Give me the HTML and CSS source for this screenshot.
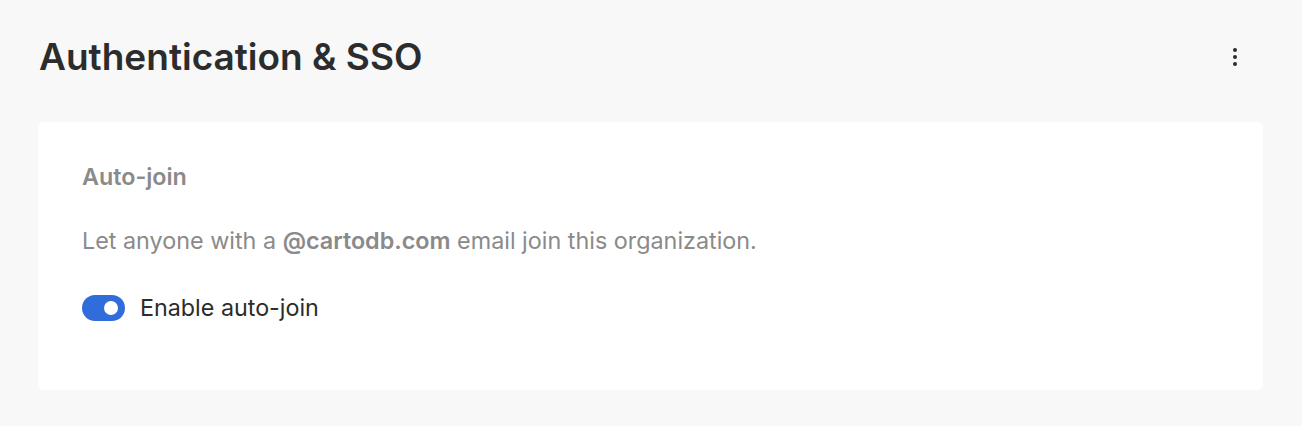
FILE: index.html
```html
<!DOCTYPE html>
<html lang="en">
<head>
<meta charset="utf-8">
<title>Authentication &amp; SSO</title>
<link rel="stylesheet" href="styles.css">
</head>
<body>
<main class="page">
  <header class="page-header">
    <h1 class="page-title">Authentication &amp; SSO</h1>
    <button class="kebab" aria-label="More options">
      <svg width="4" height="18" viewBox="0 0 4 18"><circle cx="2" cy="2" r="2" fill="#2c2c2c"/><circle cx="2" cy="9" r="2" fill="#2c2c2c"/><circle cx="2" cy="16" r="2" fill="#2c2c2c"/></svg>
    </button>
  </header>
  <section class="card">
    <h2 class="card-title">Auto-join</h2>
    <p class="card-desc">Let anyone with a <strong>@cartodb.com</strong> email join this organization.</p>
    <label class="toggle-row">
      <span class="toggle"><span class="knob"></span></span>
      <span class="toggle-label">Enable auto-join</span>
    </label>
  </section>
</main>
</body>
</html>
```
FILE: styles.css
```css
* { box-sizing: border-box; }
html, body { margin: 0; padding: 0; }
body {
  background: #f7f8f7;
  font-family: Inter, "Noto Sans", sans-serif;
  color: #2c2c2c;
}
.page {
  padding: 29px 39px 0 38px;
}
.page-header {
  display: flex;
  align-items: center;
  justify-content: space-between;
  height: 56px;
  margin-bottom: 37px;
}
.page-title {
  margin: 0 0 0 1px;
  font-size: 37px;
  font-weight: 600;
  line-height: 56px;
  color: #2c2c2c;
}
.kebab {
  border: 0;
  background: none;
  padding: 0;
  margin-right: 26px;
  display: flex;
  width: 4px;
  height: 18px;
}
.card {
  background: #fff;
  border-radius: 6px;
  padding: 41px 44px 68px;
}
.card-title {
  margin: 0 0 36px;
  font-size: 23.3px;
  font-weight: 600;
  color: #8a8a8a;
  line-height: 28px;
}
.card-desc {
  margin: 0 0 39px;
  font-size: 23.35px;
  color: #8a8a8a;
  line-height: 28px;
}
.card-desc strong { font-weight: 600; }
.toggle-row {
  display: flex;
  align-items: center;
  gap: 15px;
  height: 28px;
}
.toggle {
  width: 43px;
  height: 26px;
  border-radius: 13px;
  background: #306ddb;
  display: flex;
  align-items: center;
  justify-content: flex-end;
  padding-right: 7px;
}
.knob {
  width: 14px;
  height: 14px;
  border-radius: 50%;
  background: #fff;
}
.toggle-label {
  font-size: 23.3px;
  line-height: 28px;
  color: #2c2c2c;
}
```
